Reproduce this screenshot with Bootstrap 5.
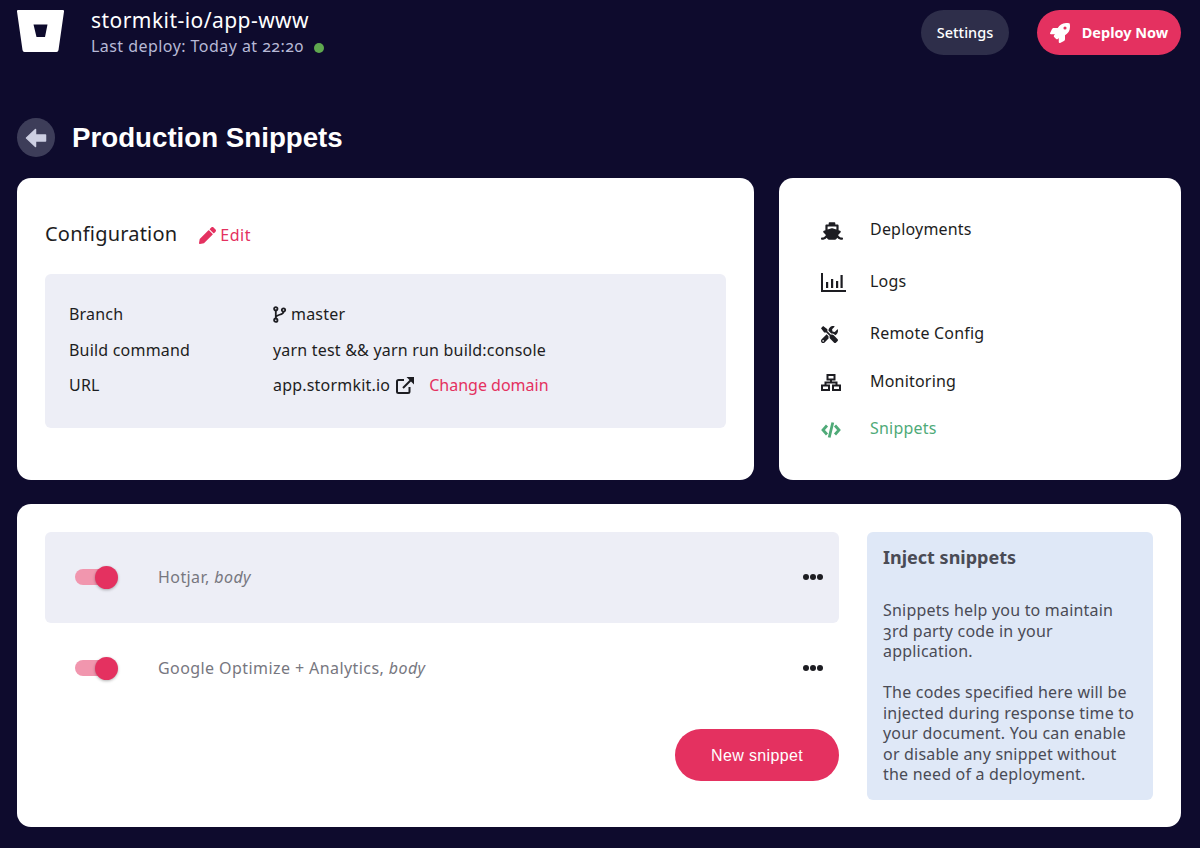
<!DOCTYPE html>
<html lang="en">
<head>
  <meta charset="UTF-8" />
  <meta name="viewport" content="width=device-width, initial-scale=1.0"/>
  <title>Production Snippets</title>
  <link href="https://cdn.jsdelivr.net/npm/bootstrap@5.3.0/dist/css/bootstrap.min.css" rel="stylesheet">
  <style>
    body { background: #0e0b2d; font-family: "Noto Sans", sans-serif; font-size: 16px; letter-spacing: .2px; color: #1d1d22; font-variant-numeric: oldstyle-nums; }
    a { text-decoration: none; }
    .page-wrap { padding: 10px 19px 0 17px; }
    .top-bar { height: 45px; }
    .logo-box { width: 47px; margin-right: 27px; }
    .repo-name { color: #fff; font-size: 21px; line-height: 22px; letter-spacing: .45px; margin-top: -1px; }
    .repo-sub { color: #b7b9d6; font-size: 16px; line-height: 22px; letter-spacing: .45px; margin-top: 4px; }
    .status-dot { width: 10px; height: 10px; border-radius: 50%; background: #5fa84f; margin-left: 10px; margin-top: 3px; }
    .pill-btn { height: 45px; border: 0; border-radius: 23px; color: #fff; font-size: 14.5px; font-weight: 500; }
    .pill-dark { width: 88px; background: #2e2e4a; margin-right: 28px; }
    .pill-red { width: 144px; background: #e43160; font-weight: 700; letter-spacing: 0; }
    .rocket-icon { margin-right: 12px; }
    .title-row { margin-top: 63px; height: 39px; margin-bottom: 21px; }
    .back-circle { width: 38px; height: 39px; border-radius: 50%; background: #3d3d59; margin-right: 17px; }
    .page-title { color: #fff; font-family: "Liberation Sans", sans-serif; font-weight: 700; font-size: 27.7px; letter-spacing: 0; margin: 0; }
    .panel { background: #fff; border-radius: 14px; }
    .config-panel { flex: 1; height: 302px; padding: 28px; }
    .menu-panel { width: 402px; height: 302px; margin-left: 25px; padding: 39px 42px; }
    .config-head { height: 56px; margin-bottom: 12px; }
    .config-title { font-size: 20px; margin: 0 22px 0 0; font-weight: 400; }
    .pink-link { color: #e43160; }
    .edit-link { letter-spacing: .5px; padding-top: 2px; }
    .info-box { background: #edeef6; border-radius: 6px; height: 154px; padding: 22.5px 24px; }
    .info-row { height: 35.5px; }
    .info-label { width: 204px; }
    .ext-icon { margin-left: 6px; }
    .change-link { margin-left: 15px; letter-spacing: 0; }
    .menu-item { color: #1d1d22; height: 24px; margin-bottom: 28px; }
    .menu-tight { margin-bottom: 24px; }
    .menu-tighter { margin-bottom: 23px; }
    .menu-icon { width: 27px; margin-right: 22px; }
    .menu-active { color: #4faa78; }
    .snip-panel { margin-top: 24px; height: 323px; padding: 28px; }
    .snip-list { flex: 1; margin-right: 28px; }
    .snip-row { height: 91px; padding: 0 16px 1px 30px; border-radius: 6px; color: #77777f; letter-spacing: .42px; }
    .snip-active { background: #edeef6; }
    .toggle-wrap { width: 43px; height: 23px; margin-right: 40px; position: relative; }
    .toggle-track { width: 32px; height: 16px; border-radius: 8px; background: #f196ae; position: absolute; left: 0; top: 3.5px; }
    .toggle-knob { width: 23px; height: 23px; border-radius: 50%; background: #e43160; position: absolute; right: 0; top: 0; box-shadow: 0 1px 3px rgba(0,0,0,.3); }
    .dots-icon { width: 20px; }
    .new-btn { width: 164px; height: 52px; border: 0; border-radius: 26px; background: #e43160; color: #fff; font-family: "Liberation Sans", sans-serif; font-size: 16px; letter-spacing: .35px; margin-top: 15px; padding-top: 3px; }
    .help-box { width: 286px; height: 268px; background: #dfe8f7; border-radius: 6px; padding: 14px 16px; color: #4a4b55; }
    .help-title { font-size: 18px; font-weight: 700; letter-spacing: 0; margin: 0 0 32px; line-height: 22px; }
    .help-box p { line-height: 20.5px; margin: 0 0 20.5px; }
  </style>
</head>
<body>
<div class="page-wrap">

  <!-- Header -->
  <div class="top-bar d-flex align-items-start">
    <div class="logo-box">
      <svg width="47" height="42" viewBox="0 0 47 42"><path fill="#fff" fill-rule="evenodd" d="M1 0H46Q47.200 0 47 1.500L41.500 40Q41.200 42 39.500 42H7.500Q5.800 42 5.500 40L0 1.500Q-.2 0 1 0ZM16.500 14.500L19.500 27H28L30.500 14.500Z"/></svg>
    </div>
    <div>
      <div class="repo-name">stormkit-io/app-www</div>
      <div class="repo-sub d-flex align-items-center">Last deploy: Today at 22:20 <span class="status-dot"></span></div>
    </div>
    <div class="ms-auto d-flex">
      <button class="pill-btn pill-dark">Settings</button>
      <button class="pill-btn pill-red d-flex align-items-center justify-content-center">
        <svg class="rocket-icon" width="20" height="20" viewBox="0 0 512 512"><path fill="#fff" d="M505.12 19.09c-1.19-5.53-6.66-11-12.21-12.19C460.72 0 435.51 0 410.41 0 307.18 0 245.27 55.2 199.05 128H94.84c-16.35.02-35.56 11.88-42.89 26.48L2.52 253.3A28.4 28.4 0 0 0 0 264a24 24 0 0 0 24 24h103.82l-22.48 22.47c-11.36 11.36-13 32.26 0 45.25l50.91 50.91c11.16 11.19 32.16 13.16 45.28 0L224 384.16V488a24 24 0 0 0 24 24 28.56 28.56 0 0 0 10.71-2.52l98.73-49.39c14.63-7.3 26.51-26.5 26.51-42.86V312.8c72.6-46.31 128.03-108.41 128.03-211.1.02-25.2.02-50.4-6.86-82.61ZM384.04 168a40 40 0 1 1 40.01-40 40 40 0 0 1-40.01 40Z"/></svg>
        Deploy Now
      </button>
    </div>
  </div>

  <!-- Title -->
  <div class="title-row d-flex align-items-center">
    <div class="back-circle d-flex align-items-center justify-content-center">
      <svg width="22" height="20" viewBox="0 0 22 20"><path fill="#cdcfe2" stroke="#cdcfe2" stroke-width="1.500" stroke-linejoin="round" d="M1.500 10L10.500 1.500V7H20.500V13H10.500V18.500Z"/></svg>
    </div>
    <h1 class="page-title">Production Snippets</h1>
  </div>

  <div class="d-flex">
    <!-- Configuration -->
    <div class="panel config-panel">
      <div class="config-head d-flex align-items-center">
        <h2 class="config-title">Configuration</h2>
        <a href="#" class="pink-link edit-link d-flex align-items-center">
          <svg class="me-1" width="17" height="17" viewBox="0 0 512 512"><path fill="#e43160" d="M497.9 142.1l-46.1 46.1c-4.700 4.700-12.300 4.700-17 0l-111-111c-4.700-4.700-4.700-12.300 0-17l46.100-46.100c18.700-18.700 49.100-18.700 67.900 0l60.100 60.100c18.800 18.700 18.800 49.100 0 67.900zM284.200 99.800L21.600 362.400.4 483.900c-2.900 16.400 11.400 30.600 27.800 27.800l121.500-21.300 262.600-262.600c4.700-4.700 4.700-12.300 0-17l-111-111c-4.800-4.700-12.400-4.700-17.100 0z"/></svg>
          Edit
        </a>
      </div>
      <div class="info-box">
        <div class="info-row d-flex align-items-center">
          <div class="info-label">Branch</div>
          <div class="d-flex align-items-center">
            <svg class="me-1" width="14" height="17" viewBox="0 0 14 17"><g fill="none" stroke="#1d1d22" stroke-width="1.800"><circle cx="2.800" cy="2.800" r="1.700"/><circle cx="2.800" cy="14.200" r="1.700"/><circle cx="10.500" cy="4" r="1.700"/><path d="M2.800 4.500V12.500M10.500 5.700C10.500 9.500 2.800 8 2.800 11.500"/></g></svg>
            master
          </div>
        </div>
        <div class="info-row d-flex align-items-center">
          <div class="info-label">Build command</div>
          <div>yarn test &amp;&amp; yarn run build:console</div>
        </div>
        <div class="info-row d-flex align-items-center">
          <div class="info-label">URL</div>
          <div class="d-flex align-items-center">
            app.stormkit.io
            <svg class="ext-icon" width="18" height="17" viewBox="0 0 18 17"><g fill="none" stroke="#1d1d22" stroke-width="2"><path d="M8 3H2.500Q1 3 1 4.500V14.500Q1 16 2.500 16H12Q13.500 16 13.500 14.500V10"/><path d="M7 11L15.500 2.500"/></g><path fill="#1d1d22" d="M10.500 0H18V7.500Z"/></svg>
            <a href="#" class="pink-link change-link">Change domain</a>
          </div>
        </div>
      </div>
    </div>

    <!-- Side menu -->
    <div class="panel menu-panel d-flex flex-column">
      <a href="#" class="menu-item d-flex align-items-center">
        <span class="menu-icon">
          <svg width="22" height="18" viewBox="0 0 640 512"><path fill="#1d1d22" d="M496.616 372.639l70.012-70.012c16.899-16.900 9.942-45.771-12.836-53.092L512 236.102V96c0-17.673-14.327-32-32-32h-64V24c0-13.255-10.745-24-24-24H248c-13.255 0-24 10.745-24 24v40h-64c-17.673 0-32 14.327-32 32v140.102l-41.792 13.433c-22.753 7.313-29.754 36.173-12.836 53.092l70.012 70.012C125.828 416.287 85.587 448 24 448c-13.255 0-24 10.745-24 24v16c0 13.255 10.745 24 24 24 61.023 0 107.499-20.610 143.258-59.396C181.677 487.432 216.021 512 256 512h128c39.979 0 74.323-24.568 88.742-59.396C508.495 491.384 554.968 512 616 512c13.255 0 24-10.745 24-24v-16c0-13.255-10.745-24-24-24-60.817 0-101.542-31.001-119.384-75.361zM192 128h256v87.531l-118.208-37.995a31.995 31.995 0 0 0-19.584 0L192 215.531V128z"/></svg>
        </span>Deployments
      </a>
      <a href="#" class="menu-item d-flex align-items-center">
        <span class="menu-icon">
          <svg width="25" height="19" viewBox="0 0 25 19"><path fill="none" stroke="#1d1d22" stroke-width="2" d="M1 0V18H25"/><path fill="#1d1d22" d="M5 9H7.200V15H5ZM10 6H12.200V15H10ZM15 8H17.200V15H15ZM19.500 2H21.700V15H19.500Z"/></svg>
        </span>Logs
      </a>
      <a href="#" class="menu-item menu-tight d-flex align-items-center">
        <span class="menu-icon">
          <svg class="ms-0" width="17" height="17" viewBox="0 0 512 512"><path fill="#1d1d22" d="M501.100 395.700L384 278.600c-23.100-23.100-57.600-27.600-85.400-13.900L192 158.100V96L64 0 0 64l96 128h62.100l106.600 106.600c-13.600 27.800-9.200 62.300 13.900 85.400l117.100 117.100c14.600 14.600 38.200 14.600 52.700 0l52.700-52.700c14.500-14.600 14.500-38.200 0-52.700zM331.700 225c28.300 0 54.900 11 74.900 31l19.400 19.400c15.800-6.900 30.800-16.500 43.800-29.500 37.100-37.100 49.700-89.300 37.900-136.700-2.200-9-13.500-12.100-20.100-5.500l-74.400 74.400-67.900-11.300L334 98.900l74.400-74.400c6.600-6.600 3.400-17.900-5.700-20.200-47.400-11.700-99.600.9-136.600 37.900-28.500 28.500-41.900 66.100-41.200 103.600l82.100 82.100c8.100-1.900 16.500-2.900 24.700-2.900zm-103.900 82l-56.700-56.700L18.700 402.800c-25 25-25 65.500 0 90.500s65.500 25 90.500 0l123.600-123.600c-7.600-19.900-9.900-41.600-5-62.700zM64 472c-13.200 0-24-10.800-24-24 0-13.300 10.700-24 24-24s24 10.700 24 24c0 13.200-10.700 24-24 24z"/></svg>
        </span>Remote Config
      </a>
      <a href="#" class="menu-item menu-tighter d-flex align-items-center">
        <span class="menu-icon">
          <svg width="20" height="17" viewBox="0 0 20 17"><g fill="none" stroke="#1d1d22" stroke-width="2"><rect x="6.500" y="1" width="7" height="4.500"/><rect x="1" y="11.500" width="7" height="4.500"/><rect x="12" y="11.500" width="7" height="4.500"/><path d="M10 5.500V8.500M4.500 11.500V8.500H15.500V11.500"/></g></svg>
        </span>Monitoring
      </a>
      <a href="#" class="menu-item menu-active d-flex align-items-center">
        <span class="menu-icon">
          <svg width="20" height="16" viewBox="0 0 20 16"><path fill="none" stroke="#4faa78" stroke-width="2.800" d="M6 3.500L2 8 6 12.500M14 3.500L18 8 14 12.500M11.800 .5L8.200 15.500"/></svg>
        </span>Snippets
      </a>
    </div>
  </div>

  <!-- Snippets -->
  <div class="panel snip-panel d-flex">
    <div class="snip-list">
      <div class="snip-row snip-active d-flex align-items-center">
        <div class="toggle-wrap"><span class="toggle-track"></span><span class="toggle-knob"></span></div>
        <div>Hotjar, <em>body</em></div>
        <svg class="dots-icon ms-auto" height="6" viewBox="0 0 20 6"><g fill="#1d1d22"><circle cx="3" cy="3" r="3"/><circle cx="10" cy="3" r="3"/><circle cx="17" cy="3" r="3"/></g></svg>
      </div>
      <div class="snip-row d-flex align-items-center">
        <div class="toggle-wrap"><span class="toggle-track"></span><span class="toggle-knob"></span></div>
        <div>Google Optimize + Analytics, <em>body</em></div>
        <svg class="dots-icon ms-auto" height="6" viewBox="0 0 20 6"><g fill="#1d1d22"><circle cx="3" cy="3" r="3"/><circle cx="10" cy="3" r="3"/><circle cx="17" cy="3" r="3"/></g></svg>
      </div>
      <div class="text-end"><button class="new-btn">New snippet</button></div>
    </div>
    <div class="help-box">
      <h3 class="help-title">Inject snippets</h3>
      <p>Snippets help you to maintain 3rd party code in your application.</p>
      <p>The codes specified here will be injected during response time to your document. You can enable or disable any snippet without the need of a deployment.</p>
    </div>
  </div>

</div>
<script src="https://cdn.jsdelivr.net/npm/bootstrap@5.3.0/dist/js/bootstrap.bundle.min.js"></script>
</body>
</html>
